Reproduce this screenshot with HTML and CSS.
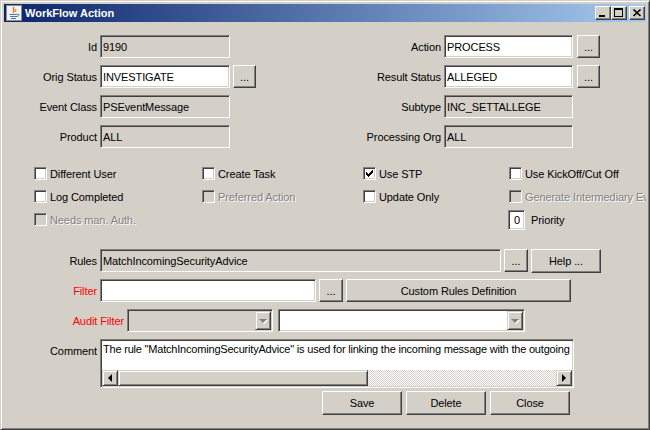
FILE: index.html
```html
<!DOCTYPE html>
<html lang="en">
<head>
    <meta charset="UTF-8">
    <title>WorkFlow Action</title>
    <link rel="stylesheet" href="styles.css">
</head>
<body>
    <div class="window">
        <div class="titlebar">
            <svg class="app-icon" width="16" height="16" viewBox="0 0 16 16">
                <rect x="0.5" y="0.5" width="15" height="15" fill="#f2f2f2" stroke="#8c8c8c"/>
                <path d="M8 2c-2 2 2 3 -1 6" stroke="#e76f00" stroke-width="1.4" fill="none"/>
                <path d="M10 4c-1 1 1 2 -1 3" stroke="#e76f00" stroke-width="1" fill="none"/>
                <path d="M3.5 9.5h8M4 11.5h7M5 13.5h5" stroke="#4a76a8" stroke-width="1" fill="none"/>
                <path d="M11.5 9c2 0 2 2 -0.5 2.5" stroke="#4a76a8" stroke-width="1" fill="none"/>
            </svg>
            <span class="title">WorkFlow Action</span>
            <div class="caption-buttons">
                <span class="caption-btn">
                    <svg width="14" height="12" viewBox="0 0 14 12" shape-rendering="crispEdges"><rect x="3" y="8" width="6" height="2" fill="#000"/></svg>
                </span>
                <span class="caption-btn">
                    <svg width="14" height="12" viewBox="0 0 14 12" shape-rendering="crispEdges"><path d="M2 1h9v9H2zM3 3v6h7V3z" fill="#000" fill-rule="evenodd"/></svg>
                </span>
                <span class="caption-btn close">
                    <svg width="14" height="12" viewBox="0 0 14 12"><path d="M3.5 2.5l7 6.5M10.5 2.5l-7 6.5" stroke="#000" stroke-width="1.7" fill="none"/></svg>
                </span>
            </div>
        </div>

        <div class="content">
            <div class="form-top">
                <label>Id</label>
                <div class="field disabled">9190</div>
                <span></span>
                <label>Action</label>
                <div class="field">PROCESS</div>
                <button class="btn dots">...</button>

                <label>Orig Status</label>
                <div class="field">INVESTIGATE</div>
                <button class="btn dots">...</button>
                <label>Result Status</label>
                <div class="field">ALLEGED</div>
                <button class="btn dots">...</button>

                <label>Event Class</label>
                <div class="field disabled">PSEventMessage</div>
                <span></span>
                <label>Subtype</label>
                <div class="field disabled">INC_SETTALLEGE</div>
                <span></span>

                <label>Product</label>
                <div class="field disabled">ALL</div>
                <span></span>
                <label>Processing Org</label>
                <div class="field disabled">ALL</div>
                <span></span>
            </div>

            <div class="checks">
                <div class="check"><span class="box"></span>Different User</div>
                <div class="check"><span class="box"></span>Create Task</div>
                <div class="check">
                    <span class="box">
                        <svg width="7" height="7" viewBox="0 0 7 7" shape-rendering="crispEdges"><path d="M6 0h1v3h-1v1h-1v1h-1v1h-1v1h-1v-1h-1v-1h-1v-3h1v1h1v1h1v-1h1v-1h1v-1h1z" fill="#000"/></svg>
                    </span>Use STP
                </div>
                <div class="check"><span class="box"></span>Use KickOff/Cut Off</div>

                <div class="check"><span class="box"></span>Log Completed</div>
                <div class="check disabled"><span class="box"></span>Preferred Action</div>
                <div class="check"><span class="box"></span>Update Only</div>
                <div class="check disabled"><span class="box"></span>Generate Intermediary Events</div>

                <div class="check disabled"><span class="box"></span>Needs man. Auth.</div>
                <span></span>
                <span></span>
                <div class="priority">
                    <div class="field number">0</div>
                    <span>Priority</span>
                </div>
            </div>

            <div class="rows">
                <div class="row">
                    <label>Rules</label>
                    <div class="field disabled rules-field">MatchIncomingSecurityAdvice</div>
                    <button class="btn small">...</button>
                    <button class="btn help">Help ...</button>
                </div>
                <div class="row">
                    <label class="red">Filter</label>
                    <div class="field filter-field"></div>
                    <button class="btn small">...</button>
                    <button class="btn custom">Custom Rules Definition</button>
                </div>
                <div class="row">
                    <label class="red wide">Audit Filter</label>
                    <div class="combo disabled audit-type">
                        <span class="combo-text"></span>
                        <span class="combo-arrow"><i class="tri-down"></i></span>
                    </div>
                    <div class="combo audit-value">
                        <span class="combo-text"></span>
                        <span class="combo-arrow"><i class="tri-down"></i></span>
                    </div>
                </div>
                <div class="row comment-row">
                    <label>Comment</label>
                    <div class="memo">
                        <div class="memo-text">The rule "MatchIncomingSecurityAdvice" is used for linking the incoming message with the outgoing message of the same trade.</div>
                        <div class="hscroll">
                            <span class="scroll-btn"><i class="tri-left"></i></span>
                            <span class="scroll-thumb"></span>
                            <span class="scroll-track"></span>
                            <span class="scroll-btn"><i class="tri-right"></i></span>
                        </div>
                    </div>
                </div>
            </div>

            <div class="actions">
                <button class="btn action">Save</button>
                <button class="btn action">Delete</button>
                <button class="btn action">Close</button>
            </div>
        </div>
    </div>
</body>
</html>
```

FILE: styles.css
```css
:root {
    --face: #d4d0c8;
    --shadow: #808080;
    --dark: #404040;
    --light: #fff;
    --title-left: #0a246a;
    --title-right: #a6caf0;
    --red: #ff0000;
}

body {
    margin: 0;
    font-family: "Liberation Sans", Arial, sans-serif;
    font-size: 11px;
    letter-spacing: -0.1px;
    color: #000;
    background: var(--face);
}

.window {
    width: 650px;
    height: 430px;
    box-sizing: border-box;
    border: 1px solid;
    border-color: var(--face) var(--dark) var(--dark) var(--face);
    box-shadow: inset 1px 1px var(--light), inset -1px -1px var(--shadow);
    padding: 3px;
    background: var(--face);
    display: flex;
    flex-direction: column;
    overflow: hidden;
}

/* title bar */
.titlebar {
    height: 18px;
    flex-shrink: 0;
    display: flex;
    align-items: center;
    padding: 0 1px 0 2px;
    background: linear-gradient(to right, var(--title-left), var(--title-right));
}

.app-icon {
    margin-right: 3px;
}

.title {
    color: #fff;
    font-weight: bold;
    letter-spacing: 0;
}

.caption-buttons {
    margin-left: auto;
    display: flex;
}

.caption-btn {
    width: 16px;
    height: 14px;
    box-sizing: border-box;
    border: 1px solid;
    border-color: var(--light) var(--dark) var(--dark) var(--light);
    box-shadow: inset -1px -1px var(--shadow);
    background: var(--face);
    display: flex;
}

.caption-btn.close {
    margin-left: 2px;
}

/* content */
.content {
    flex: 1;
    padding-top: 13px;
    overflow: hidden;
}

label {
    white-space: nowrap;
}

.red {
    color: var(--red);
}

.form-top {
    display: grid;
    grid-template-columns: 96px 130px 26px 188px 129px 27px;
    grid-auto-rows: 23px;
    row-gap: 7px;
}

.form-top label {
    align-self: center;
    text-align: right;
    padding-right: 3px;
}

.field {
    box-sizing: border-box;
    height: 23px;
    border: 1px solid;
    border-color: var(--shadow) var(--light) var(--light) var(--shadow);
    box-shadow: inset 1px 1px var(--dark), inset -1px -1px var(--face);
    background: #fff;
    padding: 0 1px 0 2px;
    display: flex;
    align-items: center;
    white-space: nowrap;
    overflow: hidden;
}

.field.disabled {
    background: var(--face);
}

.btn {
    box-sizing: border-box;
    height: 23px;
    border: 1px solid;
    border-color: var(--light) var(--dark) var(--dark) var(--light);
    box-shadow: inset -1px -1px var(--shadow);
    background: var(--face);
    font: inherit;
    letter-spacing: inherit;
    color: #000;
    padding: 0;
    white-space: nowrap;
}

.dots {
    width: 23px;
    justify-self: end;
}

/* checkboxes */
.checks {
    display: grid;
    grid-template-columns: 168px 161px 146px 200px;
    grid-auto-rows: 23px;
    margin: 14px 0 0 30px;
}

.check {
    display: flex;
    align-items: center;
    gap: 3px;
    white-space: nowrap;
}

.box {
    width: 13px;
    height: 13px;
    box-sizing: border-box;
    flex-shrink: 0;
    border: 1px solid;
    border-color: var(--shadow) var(--light) var(--light) var(--shadow);
    box-shadow: inset 1px 1px var(--dark), inset -1px -1px var(--face);
    background: #fff;
    display: flex;
    align-items: center;
    justify-content: center;
}

.check.disabled {
    color: var(--shadow);
    text-shadow: 1px 1px var(--light);
}

.check.disabled .box {
    background: var(--face);
}

.priority {
    display: flex;
    align-items: center;
    gap: 6px;
    margin-left: -1px;
}

.field.number {
    width: 17px;
    height: 20px;
    justify-content: flex-end;
    padding-right: 4px;
}

/* lower rows */
.rows {
    margin-top: 18px;
    display: flex;
    flex-direction: column;
    gap: 7px;
}

.row {
    display: flex;
    gap: 3px;
    height: 23px;
}

.row > label {
    width: 93px;
    flex-shrink: 0;
    text-align: right;
    align-self: center;
}

.row > label.wide {
    width: 120px;
}

.rules-field {
    width: 401px;
}

.filter-field {
    width: 216px;
}

.small {
    width: 24px;
}

.help {
    width: 70px;
    height: 24px;
}

.custom {
    width: 225px;
}

.combo {
    box-sizing: border-box;
    height: 23px;
    border: 1px solid;
    border-color: var(--shadow) var(--light) var(--light) var(--shadow);
    box-shadow: inset 1px 1px var(--dark), inset -1px -1px var(--face);
    background: #fff;
    padding: 1px;
    display: flex;
}

.combo.disabled {
    background: var(--face);
}

.audit-type {
    width: 146px;
}

.audit-value {
    width: 247px;
    margin-left: 2px;
}

.combo-text {
    flex: 1;
}

.combo-arrow,
.scroll-btn {
    width: 16px;
    box-sizing: border-box;
    border: 1px solid;
    border-color: var(--face) var(--dark) var(--dark) var(--face);
    box-shadow: inset 1px 1px var(--light), inset -1px -1px var(--shadow);
    background: var(--face);
    display: flex;
    align-items: center;
    justify-content: center;
}

.tri-down {
    width: 0;
    height: 0;
    border-left: 4px solid transparent;
    border-right: 4px solid transparent;
    border-top: 4px solid var(--shadow);
    filter: drop-shadow(1px 1px 0 var(--light));
}

.tri-left {
    width: 0;
    height: 0;
    border-top: 4px solid transparent;
    border-bottom: 4px solid transparent;
    border-right: 4px solid #000;
}

.tri-right {
    width: 0;
    height: 0;
    border-top: 4px solid transparent;
    border-bottom: 4px solid transparent;
    border-left: 4px solid #000;
}

.comment-row {
    height: 49px;
}

.comment-row > label {
    align-self: flex-start;
    padding-top: 6px;
}

.memo {
    width: 474px;
    box-sizing: border-box;
    border: 1px solid;
    border-color: var(--shadow) var(--light) var(--light) var(--shadow);
    box-shadow: inset 1px 1px var(--dark), inset -1px -1px var(--face);
    background: #fff;
    padding: 1px;
    display: flex;
    flex-direction: column;
}

.memo-text {
    flex: 1;
    padding: 2px 0 0 1px;
    white-space: nowrap;
    overflow: hidden;
    letter-spacing: -0.2px;
}

.hscroll {
    height: 16px;
    display: flex;
}

.scroll-thumb {
    width: 250px;
    box-sizing: border-box;
    border: 1px solid;
    border-color: var(--face) var(--dark) var(--dark) var(--face);
    box-shadow: inset 1px 1px var(--light), inset -1px -1px var(--shadow);
    background: var(--face);
}

.scroll-track {
    flex: 1;
    background: repeating-conic-gradient(#fff 0 25%, var(--face) 0 50%) 0 0 / 2px 2px;
}

/* bottom buttons */
.actions {
    display: flex;
    gap: 4px;
    margin-top: 3px;
    padding-left: 318px;
}

.action {
    width: 80px;
    height: 24px;
}
```
